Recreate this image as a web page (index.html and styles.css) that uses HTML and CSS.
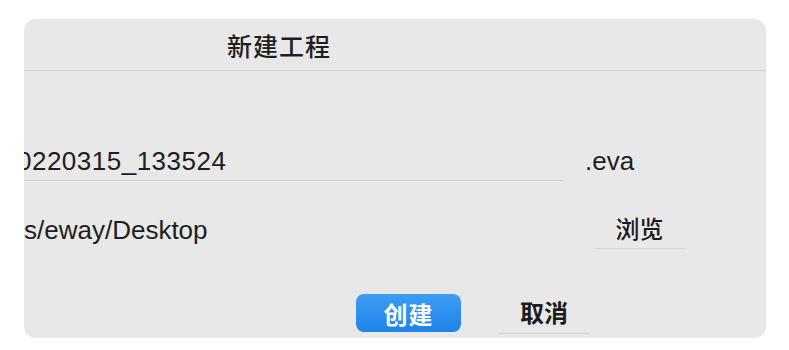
FILE: index.html
```html
<!DOCTYPE html>
<html lang="zh">
<head>
<meta charset="utf-8">
<title>新建工程</title>
<link rel="stylesheet" href="styles.css">
</head>
<body>
<div class="dialog">
  <div class="header"><span class="title">新建工程</span></div>
  <div class="content">
    <div class="row row-name">
      <div class="field"><span class="value name">20220315_133524</span></div>
      <span class="ext">.eva</span>
    </div>
    <div class="row row-path">
      <div class="field plain"><span class="value path">s/eway/Desktop</span></div>
      <div class="link-btn browse">浏览</div>
    </div>
    <div class="footer">
      <div class="primary-btn">创建</div>
      <div class="link-btn cancel">取消</div>
    </div>
  </div>
</div>
</body>
</html>
```
FILE: styles.css
```css
html, body {
  margin: 0;
  padding: 0;
  background: #ffffff;
}
body {
  font-family: "Liberation Sans", "Noto Sans CJK SC", sans-serif;
  color: #1e1e1e;
  padding: 19px 0 0 24px;
}
.dialog {
  width: 742px;
  height: 319px;
  background: #e8e8e8;
  border-radius: 12px;
  overflow: hidden;
  display: flex;
  flex-direction: column;
}
.header {
  height: 52px;
  box-sizing: border-box;
  border-bottom: 1px solid #d2d2d3;
  display: flex;
  align-items: center;
  padding-left: 203px;
}
.title {
  font-size: 25px;
  font-family: "Noto Sans CJK SC", sans-serif;
  font-weight: 500;
  color: #1f1f1f;
  letter-spacing: 1px;
}
.content {
  display: flex;
  flex-direction: column;
  padding-top: 71px;
}
.row {
  display: flex;
  align-items: center;
}
.field {
  width: 538px;
  height: 39px;
  box-sizing: border-box;
  border-bottom: 1px solid #d4d4d6;
  overflow: hidden;
  display: flex;
  align-items: center;
}
.field.plain {
  border-bottom-color: transparent;
}
.value {
  font-size: 26px;
  white-space: nowrap;
  line-height: 39px;
}
.value.name {
  margin-left: -22px;
  letter-spacing: 0.5px;
}
.value.path {
  padding-top: 3px;
}
.ext {
  font-size: 26px;
  margin-left: 23px;
}
.row-path {
  margin-top: 28px;
}
.row-path .field {
  height: 40px;
}
.link-btn {
  height: 40px;
  box-sizing: border-box;
  border-bottom: 1px solid #d6d6d8;
  display: flex;
  align-items: center;
  justify-content: center;
  font-family: "Noto Sans CJK SC", sans-serif;
  font-size: 24px;
  font-weight: 700;
  color: #1c1c1c;
}
.browse {
  width: 93px;
  margin-left: 31px;
  padding-bottom: 2px;
  font-weight: 500;
  color: #1a1a1a;
}
.footer {
  display: flex;
  align-items: flex-start;
  margin-top: 45px;
  padding-left: 332px;
}
.primary-btn {
  width: 105px;
  height: 38px;
  border-radius: 8px;
  background: linear-gradient(#3e9df3, #1f83e8);
  color: #ffffff;
  display: flex;
  align-items: center;
  justify-content: center;
  font-family: "Noto Sans CJK SC", sans-serif;
  font-size: 24px;
  font-weight: 700;
  letter-spacing: 1px;
}
.cancel {
  width: 92px;
  margin-left: 37px;
  padding-bottom: 4px;
}
```
